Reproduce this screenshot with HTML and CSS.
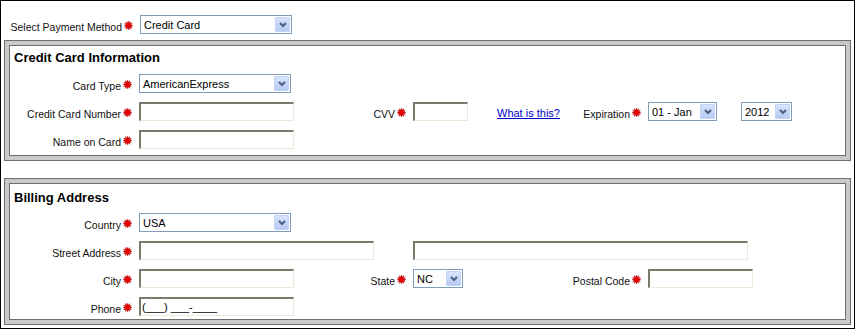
FILE: index.html
```html
<!DOCTYPE html>
<html>
<head>
<meta charset="utf-8">
<title>Payment</title>
<link rel="stylesheet" href="styles.css">
</head>
<body>
<svg class="defs" width="0" height="0" aria-hidden="true">
  <defs>
    <symbol id="star" viewBox="0 0 10 10">
      <polygon points="5,0 5.75,2.2 7.5,0.67 7.05,2.95 9.33,2.5 7.8,4.25 10,5 7.8,5.75 9.33,7.5 7.05,7.05 7.5,9.33 5.75,7.8 5,10 4.25,7.8 2.5,9.33 2.95,7.05 0.67,7.5 2.2,5.75 0,5 2.2,4.25 0.67,2.5 2.95,2.95 2.5,0.67 4.25,2.2" fill="#e00000" stroke="#b00000" stroke-width="0.4"/>
    </symbol>
    <symbol id="chev" viewBox="0 0 8 6">
      <polyline points="1,1 4,4 7,1" fill="none" stroke="#4d6185" stroke-width="2.2"/>
    </symbol>
  </defs>
</svg>
<div class="frame">
  <div class="top-row">
    <label class="lbl">Select Payment Method<svg class="req"><use href="#star"/></svg></label>
    <div class="select w152"><span class="sel-text">Credit Card</span><span class="sel-btn"><svg class="chev"><use href="#chev"/></svg></span></div>
  </div>

  <div class="panel panel-cc">
    <div class="panel-inner">
      <h2 class="heading">Credit Card Information</h2>
      <div class="rows">
        <div class="row">
          <label class="lbl">Card Type<svg class="req"><use href="#star"/></svg></label>
          <div class="select w152"><span class="sel-text">AmericanExpress</span><span class="sel-btn"><svg class="chev"><use href="#chev"/></svg></span></div>
        </div>
        <div class="row">
          <label class="lbl">Credit Card Number<svg class="req"><use href="#star"/></svg></label>
          <input class="field w155" type="text">
          <label class="lbl">CVV<svg class="req"><use href="#star"/></svg></label>
          <input class="field w55" type="text">
          <a class="link" href="#">What is this?</a>
          <label class="lbl">Expiration<svg class="req"><use href="#star"/></svg></label>
          <div class="select w69"><span class="sel-text">01 - Jan</span><span class="sel-btn"><svg class="chev"><use href="#chev"/></svg></span></div>
          <div class="select w51"><span class="sel-text">2012</span><span class="sel-btn"><svg class="chev"><use href="#chev"/></svg></span></div>
        </div>
        <div class="row">
          <label class="lbl">Name on Card<svg class="req"><use href="#star"/></svg></label>
          <input class="field w155" type="text">
        </div>
      </div>
    </div>
  </div>

  <div class="panel panel-billing">
    <div class="panel-inner">
      <h2 class="heading">Billing Address</h2>
      <div class="rows">
        <div class="row">
          <label class="lbl">Country<svg class="req"><use href="#star"/></svg></label>
          <div class="select w152"><span class="sel-text">USA</span><span class="sel-btn"><svg class="chev"><use href="#chev"/></svg></span></div>
        </div>
        <div class="row">
          <label class="lbl">Street Address<svg class="req"><use href="#star"/></svg></label>
          <input class="field w235 span-street1" type="text">
          <input class="field w335 span-street2" type="text">
        </div>
        <div class="row">
          <label class="lbl">City<svg class="req"><use href="#star"/></svg></label>
          <input class="field w155" type="text">
          <label class="lbl">State<svg class="req"><use href="#star"/></svg></label>
          <div class="select w50"><span class="sel-text">NC</span><span class="sel-btn"><svg class="chev"><use href="#chev"/></svg></span></div>
          <label class="lbl col6">Postal Code<svg class="req"><use href="#star"/></svg></label>
          <input class="field w105 span-postal" type="text">
        </div>
        <div class="row">
          <label class="lbl">Phone<svg class="req"><use href="#star"/></svg></label>
          <input class="field w155" type="text" value="(___) ___-____">
        </div>
      </div>
    </div>
  </div>
</div>
</body>
</html>
```

FILE: styles.css
```css
html, body {
  margin: 0;
  padding: 0;
  background: #fff;
}

.defs {
  position: absolute;
  width: 0;
  height: 0;
  overflow: hidden;
}

.frame {
  box-sizing: border-box;
  width: 855px;
  height: 329px;
  border: 1px solid #000;
  padding: 0 3px;
  font-family: "Liberation Sans", Arial, sans-serif;
  color: #111;
}

.top-row {
  display: grid;
  grid-template-columns: 136px auto;
  height: 19px;
  margin-top: 14px;
  align-items: end;
}

.lbl {
  font-size: 10.5px;
  line-height: 13px;
  text-align: right;
  padding-right: 7px;
  white-space: nowrap;
  align-self: end;
}

.req {
  width: 9px;
  height: 9px;
  margin-left: 2px;
  vertical-align: 1px;
}

.select {
  box-sizing: border-box;
  height: 19px;
  border: 1px solid #7f9db9;
  background: #fff;
  display: flex;
  align-items: center;
  justify-content: space-between;
  font-size: 11px;
  color: #000;
}

.sel-text {
  padding-left: 3px;
  white-space: nowrap;
  overflow: hidden;
}

.sel-btn {
  box-sizing: border-box;
  width: 15px;
  height: 15px;
  margin-right: 1px;
  border: 1px solid #c3d3f7;
  border-radius: 1px;
  background: linear-gradient(#d8e4fc, #b6caf5);
  display: flex;
  align-items: center;
  justify-content: center;
  flex: none;
}

.chev {
  width: 8px;
  height: 6px;
}

.w152 { width: 152px; }
.w69 { width: 69px; }
.w51 { width: 51px; }
.w50 { width: 50px; }

.field {
  box-sizing: border-box;
  height: 19px;
  margin: 0;
  padding: 0 1px;
  border-style: solid;
  border-width: 2px 1px 1px 2px;
  border-color: #7b7a6f #ece9d8 #ece9d8 #7b7a6f;
  background: #fff;
  font-family: "Liberation Sans", Arial, sans-serif;
  font-size: 11px;
  color: #000;
  outline: none;
}

.w155 { width: 155px; }
.w55 { width: 55px; }
.w235 { width: 235px; }
.w335 { width: 335px; }
.w105 { width: 105px; }

.panel {
  border: 1px solid #6e6e6e;
  background: #c9c9c9;
  padding: 4px;
}

.panel-cc {
  margin-top: 6px;
}

.panel-billing {
  margin-top: 17px;
}

.panel-inner {
  border: 1px solid #6e6e6e;
  background: #fff;
}

.panel-cc .panel-inner {
  padding-bottom: 6px;
}

.panel-billing .panel-inner {
  padding-bottom: 3px;
}

.heading {
  margin: 0;
  padding-left: 4px;
  font-size: 13px;
  line-height: 15px;
  font-weight: bold;
  color: #000;
}

.panel-cc .heading {
  padding-top: 4px;
}

.panel-billing .heading {
  padding-top: 6px;
}

.rows {
  display: flex;
  flex-direction: column;
  gap: 9px;
  margin-top: 9px;
}

.panel-billing .rows {
  margin-top: 8px;
}

.row {
  display: grid;
  grid-template-columns: 129px 227px 47px 84px 68px 83px 93px 1fr;
  height: 19px;
}

.link {
  align-self: end;
  font-size: 11px;
  line-height: 13px;
  color: #0000cc;
  text-decoration: underline;
  white-space: nowrap;
  margin-bottom: 1px;
}

.span-street1 {
  grid-column: 2 / span 2;
}

.span-street2 {
  grid-column: 4 / span 5;
}

.col6 {
  grid-column: 6;
}

.span-postal {
  grid-column: 7 / span 2;
}
```
